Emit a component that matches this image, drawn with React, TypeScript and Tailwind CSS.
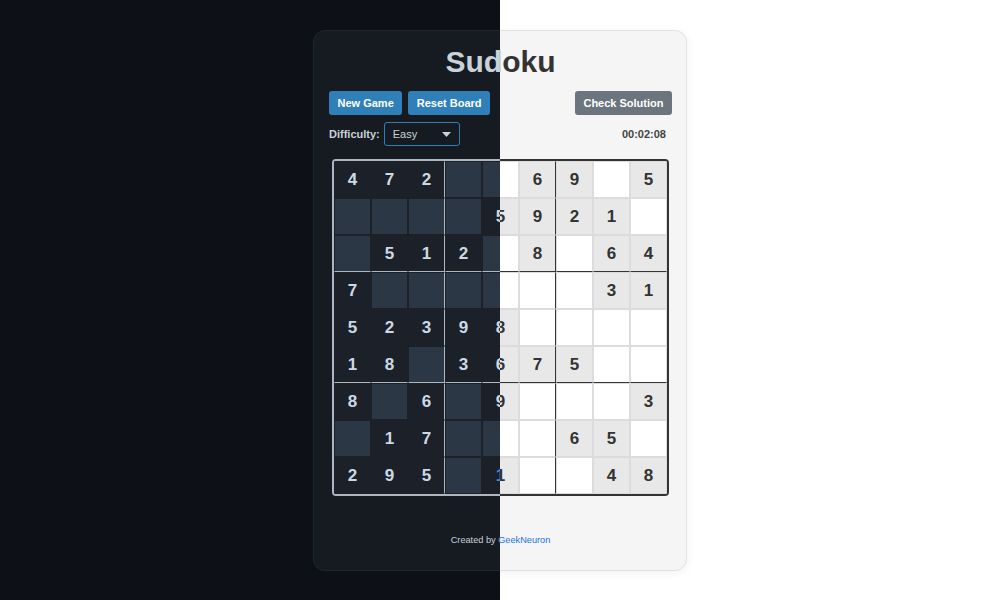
const puzzle = [
  [4, 7, 2, 0, 0, 6, 9, 0, 5],
  [0, 0, 0, 0, 5, 9, 2, 1, 0],
  [0, 5, 1, 2, 0, 8, 0, 6, 4],
  [7, 0, 0, 0, 0, 0, 0, 3, 1],
  [5, 2, 3, 9, 8, 0, 0, 0, 0],
  [1, 8, 0, 3, 6, 7, 5, 0, 0],
  [8, 0, 6, 0, 9, 0, 0, 0, 3],
  [0, 1, 7, 0, 0, 0, 6, 5, 0],
  [2, 9, 5, 0, 1, 0, 0, 4, 8],
];

const Cell = ({ value, row, col, dark }: { value: number; row: number; col: number; dark: boolean }) => {
  const boxRight = col === 2 || col === 5;
  const boxBottom = row === 2 || row === 5;

  let cls = "w-[37px] h-[37px] border flex items-center justify-center text-[17px] font-bold ";
  if (dark) {
    cls += value ? "bg-[#1c2129] " : "bg-[#2b3744] ";
    cls += "border-[#1c2129] ";
    if (boxRight) cls += "border-r-[#aeb6c0] ";
    if (boxBottom) cls += "border-b-[#aeb6c0] ";
    // this one shows up blue on the dark side
    cls += row === 8 && col === 4 ? "text-[#3b8fd9]" : "text-[#cdd9e5]";
  } else {
    cls += value ? "bg-[#e8e8e8] " : "bg-white ";
    cls += "border-[#dcdcdc] ";
    if (boxRight) cls += "border-r-[#333333] ";
    if (boxBottom) cls += "border-b-[#333333] ";
    cls += "text-[#333333]";
  }

  return <div className={cls}>{value ? value : ""}</div>;
};

const Page = ({ dark }: { dark: boolean }) => {
  return (
    <div
      className={`w-[1000px] h-[600px] flex justify-center pt-[30px] font-['Liberation_Sans',Arial,sans-serif] ${
        dark ? "bg-[#0d1117]" : "bg-white"
      }`}
    >
      <div
        className={`w-[374px] h-[541px] rounded-xl border pl-[15px] pr-[14px] pt-[14px] flex flex-col ${
          dark
            ? "bg-[#161b22] border-[#21262d]"
            : "bg-[#f5f5f5] border-[#e2e2e2] shadow-[0_2px_10px_rgba(0,0,0,0.06)]"
        }`}
      >
        <h1
          className={`text-[30px] leading-[34px] font-bold text-center ${
            dark ? "text-[#c9d1d9]" : "text-[#333333]"
          }`}
        >
          Sudoku
        </h1>

        <div className="flex flex-row justify-between mt-[12px]">
          <div className="flex flex-row gap-[6px]">
            <button className="h-[24px] px-[8.5px] rounded-[3px] bg-[#2f80b9] text-white text-[11px] font-bold">
              New Game
            </button>
            <button className="h-[24px] px-[8.5px] rounded-[3px] bg-[#2f80b9] text-white text-[11px] font-bold">
              Reset Board
            </button>
          </div>
          <button className="h-[24px] px-[8.5px] rounded-[3px] bg-[#6c757d] text-white text-[11px] font-bold">
            Check Solution
          </button>
        </div>

        <div className="flex flex-row items-center justify-between mt-[7px] h-[24px]">
          <div className="flex flex-row items-center gap-[4px]">
            <span className={`text-[11px] font-bold ${dark ? "text-[#c9d1d9]" : "text-[#333333]"}`}>
              Difficulty:
            </span>
            <div
              className={`w-[76px] h-[24px] rounded-[3px] border flex items-center justify-between pl-[8px] pr-[8px] text-[11px] ${
                dark
                  ? "border-[#2f80b9] bg-[#161b22] text-[#c9d1d9]"
                  : "border-[#cccccc] bg-white text-[#333333]"
              }`}
            >
              <span>Easy</span>
              <svg width="9" height="5" viewBox="0 0 9 5">
                <path d="M0 0 L9 0 L4.5 5 Z" fill={dark ? "#c9d1d9" : "#555555"} />
              </svg>
            </div>
          </div>
          <span className={`text-[11px] font-bold pr-[6px] ${dark ? "text-[#c9d1d9]" : "text-[#444444]"}`}>
            00:02:08
          </span>
        </div>

        <div
          className={`self-center mt-[13px] border-2 rounded-[4px] overflow-hidden grid grid-cols-9 ${
            dark ? "border-[#aeb6c0]" : "border-[#333333]"
          }`}
        >
          {puzzle.map((row, r) =>
            row.map((v, c) => <Cell key={`${r}-${c}`} value={v} row={r} col={c} dark={dark} />)
          )}
        </div>

        <p
          className={`mt-[37px] text-[9.2px] leading-[14px] text-center ${
            dark ? "text-[#c9d1d9]" : "text-[#333333]"
          }`}
        >
          Created by{" "}
          <a className={dark ? "text-[#58a6ff]" : "text-[#1a73e8]"}>GeekNeuron</a>
        </p>
      </div>
    </div>
  );
};

const App = () => {
  return (
    <div className="relative w-[1000px] h-[600px] overflow-hidden">
      <Page dark={false} />
      {/* dark theme shown on the left half */}
      <div className="absolute left-0 top-0 w-[500px] h-[600px] overflow-hidden">
        <Page dark={true} />
      </div>
    </div>
  );
};

export default App;
